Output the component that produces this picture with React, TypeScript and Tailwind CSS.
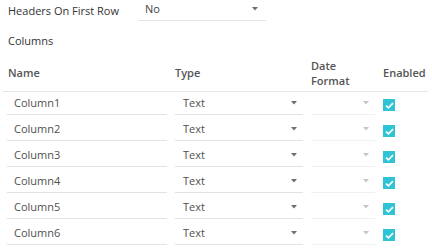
import React from 'react'

const rows = ['Column1', 'Column2', 'Column3', 'Column4', 'Column5', 'Column6']

function Caret({ light }: { light?: boolean }) {
  return (
    <svg width="6" height="4" viewBox="0 0 6 4" className="shrink-0">
      <path d="M0 0 L6 0 L3 3.5 Z" fill={light ? '#c4c7cc' : '#6b6e73'} />
    </svg>
  )
}

function Check() {
  return (
    <div className="w-[12px] h-[12px] bg-[#2ec4d6] flex items-center justify-center">
      <svg width="9" height="7" viewBox="0 0 9 7">
        <path d="M1 3.6 L3.4 5.8 L8 1.2" fill="none" stroke="#fff" strokeWidth="1.7" />
      </svg>
    </div>
  )
}

export default function App() {
  return (
    <div className="w-[432px] h-[250px] bg-white overflow-hidden text-[11px] text-[#333] font-['Open_Sans',sans-serif]">
      {/* headers on first row */}
      <div className="flex h-[21px] items-center">
        <div className="pl-[8px] w-[138px] leading-[14px]">Headers On First Row</div>
        <div className="w-[128px] h-[21px] border-b border-[#e1e4e8] flex items-center justify-between pl-[7px] pr-[8px]">
          <span className="text-[#444] leading-[14px] -mt-[2px]">No</span>
          <span className="-mt-[2px]">
            <Caret />
          </span>
        </div>
      </div>

      <div className="mt-[12px] h-[16px] leading-[16px] pl-[8px]">Columns</div>

      {/* table header */}
      <div className="ml-[3px] w-[425px] h-[43px] pt-[5px] border-b border-[#e3e6ea] pl-[4px] grid grid-cols-[160px_128px_64px_1fr] gap-x-[8px] items-center font-semibold text-[#555] leading-[14px]">
        <div className="pl-[1px] pt-[1px]">Name</div>
        <div className="pt-[1px]">Type</div>
        <div className="leading-[15px]">
          Date
          <br />
          Format
        </div>
        <div className="pt-[1px]">Enabled</div>
      </div>

      {/* rows */}
      <div className="pl-[7px]">
        {rows.map((r) => (
          <div key={r} className="h-[26px] grid grid-cols-[160px_128px_64px_1fr] gap-x-[8px] items-start">
            <div className="h-[23px] border-b border-[#dfe2e7] pl-[7px] flex items-center text-[#505050] leading-[14px]">
              {r}
            </div>
            <div className="h-[23px] border-b border-[#dfe2e7] pl-[8px] pr-[6px] flex items-center justify-between text-[#505050] leading-[14px]">
              <span>Text</span>
              <Caret />
            </div>
            <div className="h-[23px] border-b border-[#eef0f3] pr-[6px] flex items-center justify-end">
              <Caret light />
            </div>
            <div className="pt-[7px]">
              <Check />
            </div>
          </div>
        ))}
      </div>
    </div>
  )
}
